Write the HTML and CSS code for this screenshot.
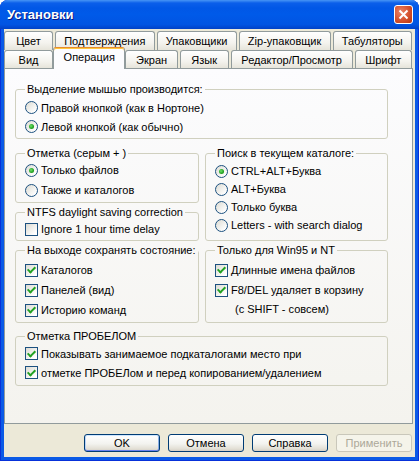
FILE: index.html
```html
<!DOCTYPE html>
<html>
<head>
    <meta charset="utf-8">
    <link rel="stylesheet" href="styles.css">
</head>

<body>
    <div class="window">
        <div class="titlebar">
            <span class="title">Установки</span>
            <span class="close">
                <svg viewBox="0 0 11 11" width="11" height="11">
                    <path d="M1.5 1.5 L9.5 9.5 M9.5 1.5 L1.5 9.5"></path>
                </svg>
            </span>
        </div>

        <div class="client">
            <div class="tabs">
                <div class="tab-row">
                    <span class="tab">Цвет</span>
                    <span class="tab">Подтверждения</span>
                    <span class="tab">Упаковщики</span>
                    <span class="tab">Zip-упаковщик</span>
                    <span class="tab">Табуляторы</span>
                </div>
                <div class="tab-row front">
                    <span class="tab">Вид</span>
                    <span class="tab active">Операция</span>
                    <span class="tab">Экран</span>
                    <span class="tab">Язык</span>
                    <span class="tab">Редактор/Просмотр</span>
                    <span class="tab">Шрифт</span>
                </div>
            </div>

            <div class="panel">
                <fieldset class="group g-mouse">
                    <legend>Выделение мышью производится:</legend>
                    <label class="opt"><span class="radio"></span>Правой кнопкой (как в Нортоне)</label>
                    <label class="opt"><span class="radio on"></span>Левой кнопкой (как обычно)</label>
                </fieldset>

                <div class="columns">
                    <div class="col">
                        <fieldset class="group g-mark">
                            <legend>Отметка (серым + )</legend>
                            <label class="opt"><span class="radio on"></span>Только файлов</label>
                            <label class="opt"><span class="radio"></span>Также и каталогов</label>
                        </fieldset>
                        <fieldset class="group g-ntfs">
                            <legend>NTFS daylight saving correction</legend>
                            <label class="opt"><span class="check"></span>Ignore 1 hour time delay</label>
                        </fieldset>
                    </div>

                    <fieldset class="group g-search">
                        <legend>Поиск в текущем каталоге:</legend>
                        <label class="opt"><span class="radio on"></span>CTRL+ALT+Буква</label>
                        <label class="opt"><span class="radio"></span>ALT+Буква</label>
                        <label class="opt"><span class="radio"></span>Только буква</label>
                        <label class="opt"><span class="radio"></span>Letters - with search dialog</label>
                    </fieldset>

                    <fieldset class="group g-exit">
                        <legend>На выходе сохранять состояние:</legend>
                        <label class="opt"><span class="check on"></span>Каталогов</label>
                        <label class="opt"><span class="check on"></span>Панелей (вид)</label>
                        <label class="opt"><span class="check on"></span>Историю команд</label>
                    </fieldset>

                    <fieldset class="group g-win95">
                        <legend>Только для Win95 и NT</legend>
                        <label class="opt"><span class="check on"></span>Длинные имена файлов</label>
                        <label class="opt"><span class="check on"></span>F8/DEL удаляет в корзину</label>
                        <div class="note">(с SHIFT - совсем)</div>
                    </fieldset>
                </div>

                <fieldset class="group g-space">
                    <legend>Отметка ПРОБЕЛОМ</legend>
                    <label class="opt"><span class="check on"></span>Показывать занимаемое подкаталогами место при</label>
                    <label class="opt"><span class="check on"></span>отметке ПРОБЕЛом и перед копированием/удалением</label>
                </fieldset>
            </div>

            <div class="buttons">
                <button class="btn default">OK</button>
                <button class="btn">Отмена</button>
                <button class="btn">Справка</button>
                <button class="btn disabled">Применить</button>
            </div>
        </div>
    </div>
</body>
</html>
```

FILE: styles.css
```css
body {
    margin: 0;
    font: 11px "Liberation Sans", Arial, sans-serif;
    color: #000;
    background: #fff;
}

/* window frame */
.window {
    width: 419px;
    height: 461px;
    display: flex;
    flex-direction: column;
    border-radius: 8px 8px 0 0;
    overflow: hidden;
    background: #0a5ae6;
    box-shadow: inset 1px 0 #0831d9, inset -1px 0 #0831d9, inset 0 -1px #0831d9;
}
.titlebar {
    flex: none;
    height: 29px;
    display: flex;
    align-items: center;
    justify-content: space-between;
    padding: 0 6px 0 7px;
    background: linear-gradient(to bottom, #4795f5 0, #0b5fea 3px, #0157e6 8px, #005ae9 50%, #0154e2 85%, #0141c6 100%);
}
.title {
    font: bold 13px "Liberation Sans", Arial, sans-serif;
    color: #fff;
    text-shadow: 1px 1px #0a1883;
}
.close {
    width: 19px;
    height: 19px;
    box-sizing: border-box;
    display: flex;
    align-items: center;
    justify-content: center;
    border: 1px solid #fff;
    border-radius: 3px;
    background: radial-gradient(circle at 35% 35%, #eb8467, #d4512e 55%, #b7330d);
}
.close path {
    stroke: #fff;
    stroke-width: 2;
    fill: none;
}

.client {
    flex: 1;
    margin: 0 4px 4px;
    padding: 2px 2px 0 0;
    display: flex;
    flex-direction: column;
    background: #ece9d8;
}

/* tab strip */
.tab-row {
    display: flex;
    gap: 2px;
    height: 19px;
    margin-right: 1px;
}
.tab-row.front {
    height: 18px;
}
.tab {
    flex: 1 1 auto;
    min-width: 49px;
    box-sizing: border-box;
    padding: 0 8px;
    display: flex;
    align-items: center;
    justify-content: center;
    white-space: nowrap;
    border: 1px solid #919b9c;
    border-bottom: 0;
    border-radius: 3px 3px 0 0;
    background: linear-gradient(#fff, #f4f3ee 60%, #e6e4da);
}
.tab.active {
    position: relative;
    z-index: 1;
    height: 22px;
    margin: -3px -2px -1px;
    padding-bottom: 3px;
    border-top-color: #e68b2c;
    box-shadow: inset 0 1px #ffc73c;
    background: #fcfcfe;
}

.panel {
    flex: none;
    height: 356px;
    box-sizing: border-box;
    padding: 14px 24px 0 10px;
    border: 1px solid #919b9c;
    background: linear-gradient(#fcfcfe, #f4f3ee);
}

/* group boxes */
.group {
    margin: 0;
    min-width: 0;
    padding: 2px 2px 2px 9px;
    border: 1px solid #d0d0bf;
    border-radius: 3px;
}
.group legend {
    padding: 0 2px;
    line-height: 13px;
    white-space: nowrap;
}
.opt {
    display: flex;
    align-items: center;
    height: 19px;
    white-space: nowrap;
}
.g-mark,
.g-ntfs {
    padding-top: 0;
}
.g-mark .opt,
.g-ntfs .opt,
.g-exit .opt,
.g-win95 .opt {
    height: 20px;
}
.g-ntfs {
    padding-bottom: 1px;
}
.g-exit,
.g-win95 {
    padding-top: 3px;
}
.g-search {
    padding-bottom: 5px;
}
.g-search .opt {
    height: 18px;
}
.g-space {
    padding-top: 1px;
    padding-bottom: 3px;
}
.note {
    height: 18px;
    line-height: 18px;
    padding-left: 20px;
}

.columns {
    display: grid;
    grid-template-columns: 184px 183px;
    column-gap: 6px;
    row-gap: 3px;
    margin: 8px 0 7px;
}
.col {
    display: flex;
    flex-direction: column;
    gap: 3px;
}

/* controls */
.radio,
.check {
    flex: none;
    width: 13px;
    height: 13px;
    box-sizing: border-box;
    margin-right: 3px;
    display: flex;
    align-items: center;
    justify-content: center;
    border: 1px solid #1c5180;
    background: linear-gradient(135deg, #dcdbd3, #fff 85%);
}
.radio {
    border-radius: 50%;
}
.radio.on::after {
    content: "";
    width: 5px;
    height: 5px;
    border-radius: 50%;
    background: radial-gradient(circle at 40% 40%, #6fe06b, #21a121 60%, #1a861a);
}
.check.on::after {
    content: "";
    width: 3px;
    height: 6px;
    margin-top: -2px;
    border: solid #21a121;
    border-width: 0 2px 2px 0;
    transform: rotate(45deg);
}

/* dialog buttons */
.buttons {
    display: flex;
    justify-content: flex-end;
    gap: 8px;
    margin-top: 10px;
    padding-right: 1px;
}
.btn {
    width: 76px;
    height: 18px;
    box-sizing: border-box;
    padding: 0;
    font: 11px "Liberation Sans", Arial, sans-serif;
    color: #000;
    border: 1px solid #003c74;
    border-radius: 3px;
    background: linear-gradient(#fff, #f3f3ef 55%, #e3e0d6 85%, #d6d0c5);
}
.btn.default {
    box-shadow: inset 0 1px #cee7ff, inset 0 -1px #6982ee, inset 1px 0 #bcd4f6, inset -1px 0 #89ade4;
}
.btn.disabled {
    color: #aca899;
    border-color: #c9c7ba;
    background: #f5f4ea;
}
```
